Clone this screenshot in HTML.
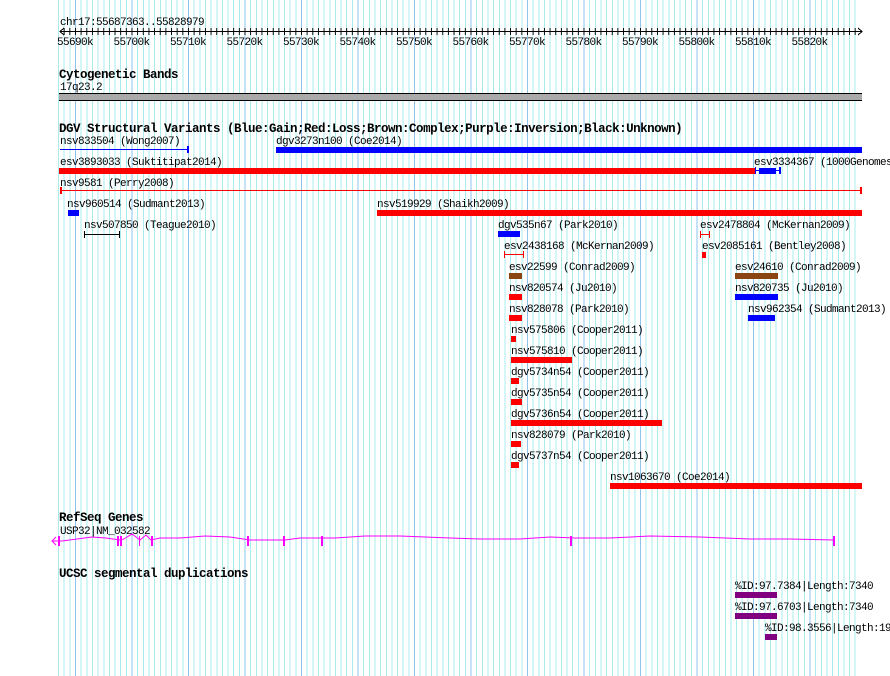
<!DOCTYPE html>
<html><head><meta charset="utf-8"><style>
html,body{margin:0;padding:0;background:#fff;width:890px;height:676px;overflow:hidden}
svg{display:block}
text{font-family:"Liberation Mono","DejaVu Sans Mono",monospace;font-size:11px;letter-spacing:-0.6px;fill:#000}
.b{font-weight:bold;font-size:12.5px;letter-spacing:-0.5px}
</style></head><body>
<svg width="890" height="676" xmlns="http://www.w3.org/2000/svg" shape-rendering="crispEdges">
<defs>
<pattern id="g" patternUnits="userSpaceOnUse" x="75" y="0" width="56.5" height="676">
<rect x="0" y="0" width="1" height="676" fill="#8ec4ec"/>
<rect x="5.65" width="1" height="676" fill="#a8ecec"/>
<rect x="11.3" width="1" height="676" fill="#a8ecec"/>
<rect x="16.95" width="1" height="676" fill="#a8ecec"/>
<rect x="22.6" width="1" height="676" fill="#a8ecec"/>
<rect x="28.25" width="1" height="676" fill="#a8ecec"/>
<rect x="33.9" width="1" height="676" fill="#a8ecec"/>
<rect x="39.55" width="1" height="676" fill="#a8ecec"/>
<rect x="45.2" width="1" height="676" fill="#a8ecec"/>
<rect x="50.85" width="1" height="676" fill="#a8ecec"/>
</pattern>
<pattern id="t" patternUnits="userSpaceOnUse" x="75" y="0" width="5.65" height="10">
<rect x="0" y="0" width="1" height="10" fill="#000"/>
</pattern>
</defs>
<rect x="58" y="0" width="801" height="676" fill="url(#g)"/>

<text x="60" y="25">chr17:55687363..55828979</text>
<rect x="60" y="28" width="800" height="7" fill="url(#t)"/>
<rect x="60" y="31" width="802" height="1" fill="#000"/>
<path d="M64 28 L60 31.5 L64 35 M858 28 L862 31.5 L858 35" stroke="#000" fill="none"/>
<g text-anchor="middle">
<text x="75" y="45">55690k</text><text x="131.5" y="45">55700k</text><text x="188" y="45">55710k</text><text x="244.5" y="45">55720k</text><text x="301" y="45">55730k</text><text x="357.5" y="45">55740k</text><text x="414" y="45">55750k</text><text x="470.5" y="45">55760k</text><text x="527" y="45">55770k</text><text x="583.5" y="45">55780k</text><text x="640" y="45">55790k</text><text x="696.5" y="45">55800k</text><text x="753" y="45">55810k</text><text x="809.5" y="45">55820k</text>
</g>

<text class="b" x="59" y="78">Cytogenetic Bands</text>
<text x="60" y="90">17q23.2</text>
<rect x="59" y="93" width="803" height="8" fill="#aaa"/>
<rect x="59" y="93" width="803" height="1" fill="#000"/>
<rect x="59" y="100" width="803" height="1" fill="#000"/>

<text class="b" x="59" y="132">DGV Structural Variants (Blue:Gain;Red:Loss;Brown:Complex;Purple:Inversion;Black:Unknown)</text>
<text x="60" y="144">nsv833504 (Wong2007)</text>
<rect x="60" y="149" width="128" height="1" fill="#00f"/><rect x="187" y="146" width="2" height="7" fill="#00f"/>
<text x="276" y="144">dgv3273n100 (Coe2014)</text>
<rect x="276" y="147" width="586" height="6" fill="#00f"/>
<text x="60" y="165">esv3893033 (Suktitipat2014)</text>
<rect x="59" y="168" width="696" height="6" fill="#f00"/>
<text x="754" y="165">esv3334367 (1000Genomes</text>
<rect x="755" y="170" width="25" height="1" fill="#00f"/><rect x="759" y="168" width="17" height="6" fill="#00f"/><rect x="755" y="167" width="1" height="7" fill="#00f"/><rect x="779" y="167" width="2" height="7" fill="#00f"/>
<text x="60" y="186">nsv9581 (Perry2008)</text>
<rect x="60" y="190" width="802" height="1" fill="#f00"/><rect x="60" y="187" width="2" height="7" fill="#f00"/><rect x="860" y="187" width="2" height="7" fill="#f00"/>
<text x="67" y="207">nsv960514 (Sudmant2013)</text>
<rect x="68" y="210" width="11" height="6" fill="#00f"/>
<text x="377" y="207">nsv519929 (Shaikh2009)</text>
<rect x="377" y="210" width="485" height="6" fill="#f00"/>
<text x="84" y="228">nsv507850 (Teague2010)</text>
<rect x="84" y="234" width="36" height="1" fill="#000"/><rect x="84" y="231" width="1" height="7" fill="#000"/><rect x="119" y="231" width="1" height="7" fill="#000"/>
<text x="498" y="228">dgv535n67 (Park2010)</text>
<rect x="498" y="231" width="22" height="6" fill="#00f"/>
<text x="700" y="228">esv2478804 (McKernan2009)</text>
<rect x="700" y="234" width="10" height="1" fill="#f00"/><rect x="700" y="231" width="1" height="7" fill="#f00"/><rect x="709" y="231" width="1" height="7" fill="#f00"/>
<text x="504" y="249">esv2438168 (McKernan2009)</text>
<rect x="504" y="254" width="20" height="1" fill="#f00"/><rect x="504" y="251" width="1" height="7" fill="#f00"/><rect x="523" y="251" width="1" height="7" fill="#f00"/>
<text x="702" y="249">esv2085161 (Bentley2008)</text>
<rect x="702" y="252" width="4" height="6" fill="#f00"/>
<text x="509" y="270">esv22599 (Conrad2009)</text>
<rect x="509" y="273" width="13" height="6" fill="#8b4513"/>
<text x="735" y="270">esv24610 (Conrad2009)</text>
<rect x="735" y="273" width="43" height="6" fill="#8b4513"/>
<text x="509" y="291">nsv820574 (Ju2010)</text>
<rect x="509" y="294" width="13" height="6" fill="#f00"/>
<text x="735" y="291">nsv820735 (Ju2010)</text>
<rect x="735" y="294" width="43" height="6" fill="#00f"/>
<text x="509" y="312">nsv828078 (Park2010)</text>
<rect x="509" y="315" width="13" height="6" fill="#f00"/>
<text x="748" y="312">nsv962354 (Sudmant2013)</text>
<rect x="748" y="315" width="27" height="6" fill="#00f"/>
<text x="511" y="333">nsv575806 (Cooper2011)</text>
<rect x="511" y="336" width="5" height="6" fill="#f00"/>
<text x="511" y="354">nsv575810 (Cooper2011)</text>
<rect x="511" y="357" width="61" height="6" fill="#f00"/>
<text x="511" y="375">dgv5734n54 (Cooper2011)</text>
<rect x="511" y="378" width="8" height="6" fill="#f00"/>
<text x="511" y="396">dgv5735n54 (Cooper2011)</text>
<rect x="511" y="399" width="11" height="6" fill="#f00"/>
<text x="511" y="417">dgv5736n54 (Cooper2011)</text>
<rect x="511" y="420" width="151" height="6" fill="#f00"/>
<text x="511" y="438">nsv828079 (Park2010)</text>
<rect x="511" y="441" width="10" height="6" fill="#f00"/>
<text x="511" y="459">dgv5737n54 (Cooper2011)</text>
<rect x="511" y="462" width="8" height="6" fill="#f00"/>
<text x="610" y="480">nsv1063670 (Coe2014)</text>
<rect x="610" y="483" width="252" height="6" fill="#f00"/>

<text class="b" x="59" y="521">RefSeq Genes</text>
<text x="60" y="534">USP32|NM_032582</text>
<g fill="none" stroke="#f0f" stroke-width="1" shape-rendering="auto">
<path d="M52 541 L62 541 L92 537 L106 538 L120 540 M122 540 L132 534 L140 540 L146 535 L151 540 L160 538 L180 538 L205 536 L230 537 L250 540 L285 540 L300 538 L335 538 L365 536 L400 536 L450 538 L480 539 L520 539 L550 537 L575 538 L610 538 L650 536 L700 537 L750 539 L790 539 L834 540"/>
<path d="M56 537 L52 541 L56 545"/>
</g>
<g fill="#f0f">
<rect x="58" y="536" width="2" height="10"/><rect x="117" y="536" width="2" height="10"/><rect x="120" y="536" width="2" height="10"/><rect x="139" y="536" width="1" height="10"/><rect x="151" y="536" width="2" height="10"/><rect x="247" y="536" width="2" height="10"/><rect x="283" y="536" width="2" height="10"/><rect x="321" y="536" width="2" height="10"/><rect x="570" y="536" width="2" height="10"/><rect x="833" y="536" width="2" height="10"/>
</g>

<text class="b" x="59" y="577">UCSC segmental duplications</text>
<text x="735" y="589">%ID:97.7384|Length:7340</text>
<rect x="735" y="592" width="42" height="6" fill="#800080"/>
<text x="735" y="610">%ID:97.6703|Length:7340</text>
<rect x="735" y="613" width="42" height="6" fill="#800080"/>
<text x="765" y="631">%ID:98.3556|Length:19</text>
<rect x="765" y="634" width="12" height="6" fill="#800080"/>
</svg>
</body></html>
